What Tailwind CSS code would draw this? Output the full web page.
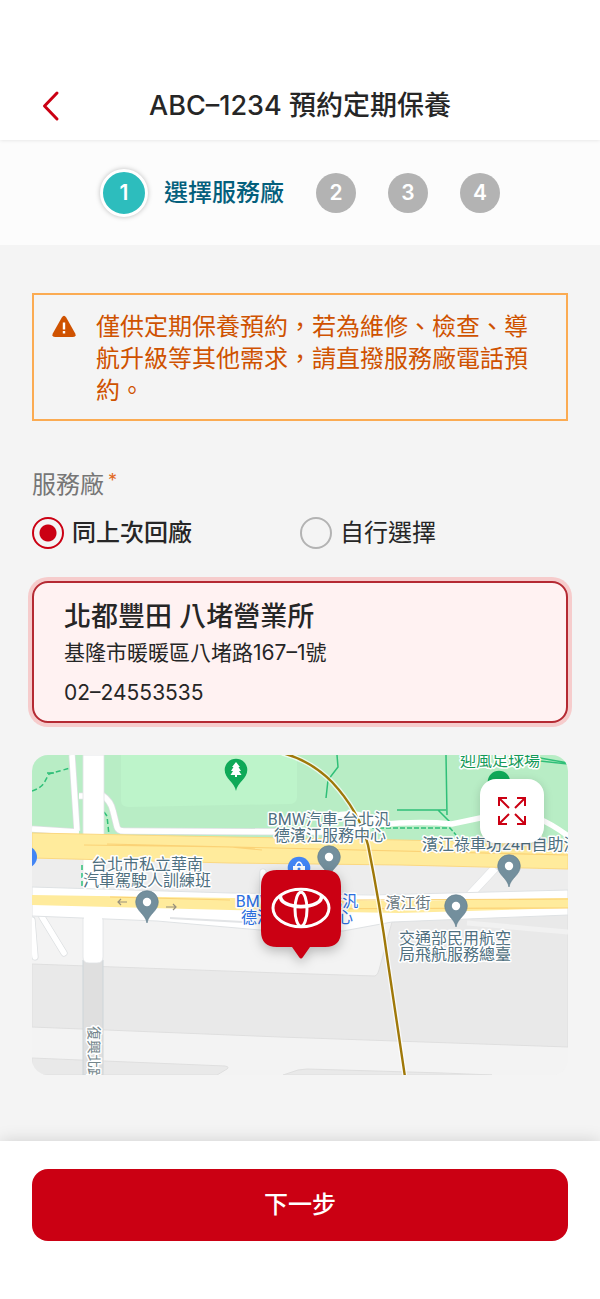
<!DOCTYPE html>
<html lang="zh-Hant">

<head>
  <meta charset="UTF-8">
  <meta name="viewport" content="width=device-width, initial-scale=1.0">
  <title>預約定期保養</title>
  <script src="https://cdn.jsdelivr.net/npm/@tailwindcss/browser@4"></script>
</head>

<body class="min-h-screen flex flex-col bg-[#f4f4f4] text-[#262626] font-['Inter','Noto_Sans_CJK_TC',sans-serif]">

  <!-- Header -->
  <header class="relative z-10 bg-white pt-18 shadow-[0_0_4px_rgba(0,0,0,0.12)]">
    <div class="relative flex h-17 items-center justify-center">
      <button type="button" aria-label="返回" class="absolute left-8 flex size-10 items-center justify-center">
        <svg class="size-10" viewBox="0 0 40 40" fill="none" stroke="#cb0013" stroke-width="3" stroke-linecap="round" stroke-linejoin="round">
          <path d="M25 7 L12.500 20 L25 33" />
        </svg>
      </button>
      <h1 class="text-[27px] leading-9 font-medium">ABC–1234 預約定期保養</h1>
    </div>
  </header>

  <!-- Steps -->
  <nav aria-label="步驟" class="bg-[#fcfcfc]">
    <ol class="flex h-[105px] items-center justify-center gap-8 text-[21px] font-semibold text-white">
      <li class="flex items-center gap-4 text-2xl font-medium text-[#045f7c]">
        <span class="flex size-12 items-center justify-center rounded-full border-3 border-white bg-[#2dbdbd] text-[21px] font-semibold text-white shadow-[0_0_5px_rgba(0,0,0,0.25)]">1</span>
        選擇服務廠
      </li>
      <li class="flex size-10 items-center justify-center rounded-full bg-[#b3b3b3]">2</li>
      <li class="flex size-10 items-center justify-center rounded-full bg-[#b3b3b3]">3</li>
      <li class="flex size-10 items-center justify-center rounded-full bg-[#b3b3b3]">4</li>
    </ol>
  </nav>

  <main class="flex-1 px-8 pt-12 pb-16">

    <!-- Notice -->
    <div role="note" class="flex gap-5 border-2 border-[#fbab52] px-[18px] pt-4 pb-3 text-[#cf5200]">
      <svg class="mt-1 size-6 shrink-0" viewBox="0 0 24 24">
        <path d="M9.800 2.400 Q12 -0.800 14.200 2.400 L23.200 18.500 Q24.600 22 21 22 H3 Q-0.600 22 0.800 18.500 Z" fill="#cf5200" />
        <path d="M12 7.500 V14.500" stroke="#fff" stroke-width="2.400" />
        <path d="M12 16 V18.500" stroke="#fff" stroke-width="2.400" />
      </svg>
      <p class="flex-1 text-2xl leading-8">僅供定期保養預約，若為維修、檢查、導航升級等其他需求，請直撥服務廠電話預約。</p>
    </div>

    <!-- Service center choice -->
    <fieldset class="mt-11">
      <legend class="flex gap-1 text-2xl leading-10 text-[#767676]">服務廠 <span class="text-lg leading-8 text-[#e2691e]">*</span></legend>
      <div class="grid grid-cols-2 pt-3 text-2xl leading-8">
        <label class="flex items-center gap-2 font-medium">
          <input type="radio" name="center" checked class="size-8 appearance-none rounded-full border-2 border-[#b3b3b3] checked:border-[#cb0013] checked:bg-[radial-gradient(circle,#cb0013_8px,transparent_9px)]">
          同上次回廠
        </label>
        <label class="flex items-center gap-2">
          <input type="radio" name="center" class="size-8 appearance-none rounded-full border-2 border-[#b3b3b3] checked:border-[#cb0013] checked:bg-[radial-gradient(circle,#cb0013_8px,transparent_9px)]">
          自行選擇
        </label>
      </div>
    </fieldset>

    <!-- Selected center -->
    <section class="mt-8 rounded-2xl border-2 border-[#b52a33] bg-[#fff2f2] px-[30px] pt-4 pb-2.5 shadow-[0_0_0_4px_#f6cccc]">
      <h2 class="text-[27px] leading-9 font-medium">北都豐田 八堵營業所</h2>
      <p class="text-[21px] leading-9">基隆市暖暖區八堵路167–1號</p>
      <p class="mt-1 text-[21px] leading-9">02–24553535</p>
    </section>

    <!-- Map -->
    <section aria-label="地圖" class="relative mt-8 h-80 overflow-hidden rounded-2xl bg-[#f2f2f2]">
      <svg class="h-full w-full" viewBox="0 0 536 320" preserveAspectRatio="xMidYMid slice">
        <!-- Land -->
        <rect width="536" height="320" fill="#f3f3f3" />
        <path d="M0 100 L536 110 V140 L198 138 L0 133 Z" fill="#ededed" />
        <path d="M0 209 L248 218 L343 221 Q346 220 347 215 L360 167 L536 158 V292 L248 282 L0 272 Z" fill="#e9e9e9" stroke="#dfdfdf" />
        <path d="M0 303 L193 311 Q198 312 195 314 L185 320 H0 Z" fill="#e9e9e9" stroke="#dfdfdf" />
        <path d="M251 320 L266 315 L275 314 L411 318 L460 320 Z" fill="#e9e9e9" stroke="#dfdfdf" />
        <path d="M0 0 H536 V92 L0 82 Z" fill="#b8edc5" />
        <path d="M89 0 H265 V43 Q264 49 257 49 L98 52 Q89 52 89 46 Z" fill="#bdf4ca" />

        <!-- Footpaths -->
        <g fill="none" stroke="#2fbf78" stroke-width="1.500">
          <path d="M0 36 Q9 33 12 28 L17 19 L38 13 M72 57 L75 61 L77 80" stroke-dasharray="5 3" />
          <path d="M15 18 H22 M305 0 L306 12 L296 25 L294 43 M365 55 H414 M414 0 L415 60 M406 55 L419 68 M508 3 L536 8 M508 6 L536 9" />
          <path d="M340 73 H418 L424 80 M272 85 L264 80" stroke-dasharray="5 2" />
        </g>

        <!-- Side roads -->
        <g fill="none" stroke="#dcdfe1" stroke-width="7">
          <path d="M40 0 L45 76 M0 74 L46 77 M47 41 H54 M70 40 Q79 46 81 56 L85 72 Q86 76 92 76 L300 77" />
          <path d="M463 113 L435 143" stroke-width="9" />
          <path d="M10 162 L32 198 M0 165 L3 202 M231 117 V145" stroke-linecap="round" />
        </g>
        <g fill="none" stroke="#fff" stroke-width="5.500">
          <path d="M40 0 L45 76 M0 74 L47 77 M47 41 H54 M70 40 Q79 46 81 56 L85 72 Q86 76 92 76 L300 77 Q365 64 420 69 L448 63 H505 Q520 69 536 81" />
          <path d="M300 62 Q322 54 345 66" />
          <path d="M463 113 L435 143" stroke-width="8" />
          <path d="M10 162 L32 198 M0 165 L3 202 M231 117 V145" stroke-linecap="round" />
        </g>

        <!-- Main roads -->
        <path d="M51 205 H71 V320 H51 Z" fill="#dfdfdf" stroke="#cdd5d9" />
        <path d="M51 0 H72 V82 H51 Z M51 100 H71 V202 Q71 208 65 208 H57 Q51 208 51 202 Z" fill="#fff" stroke="#dfe2e4" stroke-width="0.800" />
        <path d="M50 110 V138" fill="none" stroke="#2fbf78" stroke-width="1.500" stroke-dasharray="5 3" />
        <path d="M0 132 L198 138 L340 140 L536 135 V160 L360 167 L311 176 L228 175 L125 166 L0 161 Z" fill="#fff" stroke="#dfe2e4" />
        <path d="M52 158 H70 V166 H52 Z" fill="#fff" />
        <path d="M138 163 L230 168 H300" fill="none" stroke="#e2e4e6" stroke-width="2" />
        <path d="M435 168 L536 177" stroke="#f1f1f1" stroke-width="5" />
        <path d="M0 78 L198 82 L368 85 L536 89 V114 L368 110 L198 108 L0 103 Z" fill="#ffeb9c" stroke="#fbd880" />
        <path d="M0 140 L198 143 L368 146 L536 143 V153 L368 158 L198 155 L0 150 Z" fill="#ffeb9c" />
        <path d="M52 90 L198 92 L230 95 M75 89 L536 100 M78 142 L198 145 M320 145 L536 144 M230 154 L536 153" fill="none" stroke="#fbd276" stroke-width="1.200" />
        <path d="M95 147 H86 M89 144 L86 147 L89 150 M134 152 H144 M141 149 L144 152 L141 155" fill="none" stroke="#97907d" stroke-width="1.200" />

        <!-- Metro line -->
        <g fill="none">
          <path d="M250 -2 Q278 5 300 27 Q327 56 336 90 Q348 150 356 208 L373 322" stroke="#fff" stroke-opacity="0.700" stroke-width="5" />
          <path d="M250 -2 Q278 5 300 27 Q327 56 336 90 Q348 150 356 208 L373 322" stroke="#9f7809" stroke-width="2.400" />
        </g>

        <!-- Place names -->
        <g class="text-base font-['Roboto','Noto_Sans_CJK_TC',sans-serif]" fill="#4f7080" stroke="#fff" stroke-width="3" stroke-linejoin="round" paint-order="stroke" text-anchor="middle">
          <text x="115" y="115">台北市私立華南</text>
          <text x="115" y="131">汽車駕駛人訓練班</text>
          <text x="297" y="70">BMW汽車-台北汎</text>
          <text x="298" y="86">德濱江服務中心</text>
          <text x="376" y="153" class="text-[15px]" fill="#6a7880">濱江街</text>
          <text x="423" y="189">交通部民用航空</text>
          <text x="423" y="205">局飛航服務總臺</text>
          <text x="390" y="95" text-anchor="start">濱江祿車坊24H自助洗</text>
          <text x="468" y="11" fill="#149a59">迎風足球場</text>
          <text x="265" y="152" fill="#2c6fe0">BMW汽車-台北汎</text>
          <text x="265" y="168" fill="#2c6fe0">德濱江服務中心</text>
          <text transform="translate(57 271) rotate(90)" text-anchor="start" class="text-sm" fill="#73858b">復興北路</text>
        </g>

        <!-- Pins -->
        <defs>
          <path id="pin" d="M0 21 C-1.500 12 -11.300 9 -11.300 0 A11.300 11.300 0 0 1 11.300 0 C11.300 9 1.500 12 0 21 Z" />
        </defs>
        <g fill="#738f9d" stroke="#5d7b8a" stroke-width="0.600">
          <use href="#pin" x="115" y="147" />
          <use href="#pin" x="297" y="102" />
          <use href="#pin" x="477" y="111" />
          <use href="#pin" x="424" y="151" />
        </g>
        <g fill="#fff">
          <circle cx="115" cy="147" r="4.200" />
          <circle cx="297" cy="102" r="4.200" />
          <circle cx="477" cy="111" r="4.200" />
          <circle cx="424" cy="151" r="4.200" />
        </g>
        <use href="#pin" x="204" y="15" fill="#0fa958" />
        <path d="M204 7 L208 12 H206.500 L209 16 H207 L209.500 20 H205 V22 H203 V20 H198.500 L201 16 H199 L201.500 12 H200 Z" fill="#fff" />
        <use href="#pin" x="467" y="27" fill="#0fa958" />
        <circle cx="-6" cy="102" r="11" fill="#4285f4" />
        <circle cx="267" cy="113" r="11.300" fill="#4285f4" />
        <path d="M261 111 H273 V120 H261 Z" fill="#fff" />
        <path d="M264 112 V110 Q267 104 270 110 V112" fill="none" stroke="#fff" stroke-width="1.600" />
        <circle cx="267" cy="114" r="1.500" fill="#4285f4" />

        <!-- Dealer marker -->
        <g class="drop-shadow-[0_4px_6px_rgba(0,0,0,0.25)]">
          <path d="M245 115 H293 Q309 115 309 131 V176 Q309 192 293 192 H278 L271 202 Q269 205 267 202 L260 192 H245 Q229 192 229 176 V131 Q229 115 245 115 Z" fill="#cb0013" />
        </g>
        <g fill="none" stroke="#fff" stroke-width="3">
          <ellipse cx="269" cy="153" rx="28" ry="18.800" />
          <ellipse cx="269" cy="154.300" rx="6" ry="17" />
          <path d="M248.500 140 C246 155.500 292 155.500 289.500 140" stroke-width="3.600" />
        </g>
      </svg>
      <button type="button" aria-label="放大地圖" class="absolute top-6 right-6 flex size-16 items-center justify-center rounded-2xl bg-white shadow-[0_2px_10px_rgba(0,0,0,0.15)]">
        <svg class="size-7" viewBox="0 0 28 28" fill="none" stroke="#cb0013" stroke-width="2">
          <path d="M1 9 V1 H9 M1 1 L11 11 M19 1 H27 V9 M27 1 L17 11 M1 19 V27 H9 M1 27 L11 17 M19 27 H27 V19 M27 27 L17 17" />
        </svg>
      </button>
    </section>

  </main>

  <!-- Footer -->
  <footer class="relative bg-white px-8 pt-7 pb-[58px] shadow-[0_0_16px_rgba(0,0,0,0.15)]">
    <button type="button" class="h-18 w-full rounded-2xl bg-[#cb0013] text-2xl font-medium text-white">下一步</button>
  </footer>

</body>

</html>
